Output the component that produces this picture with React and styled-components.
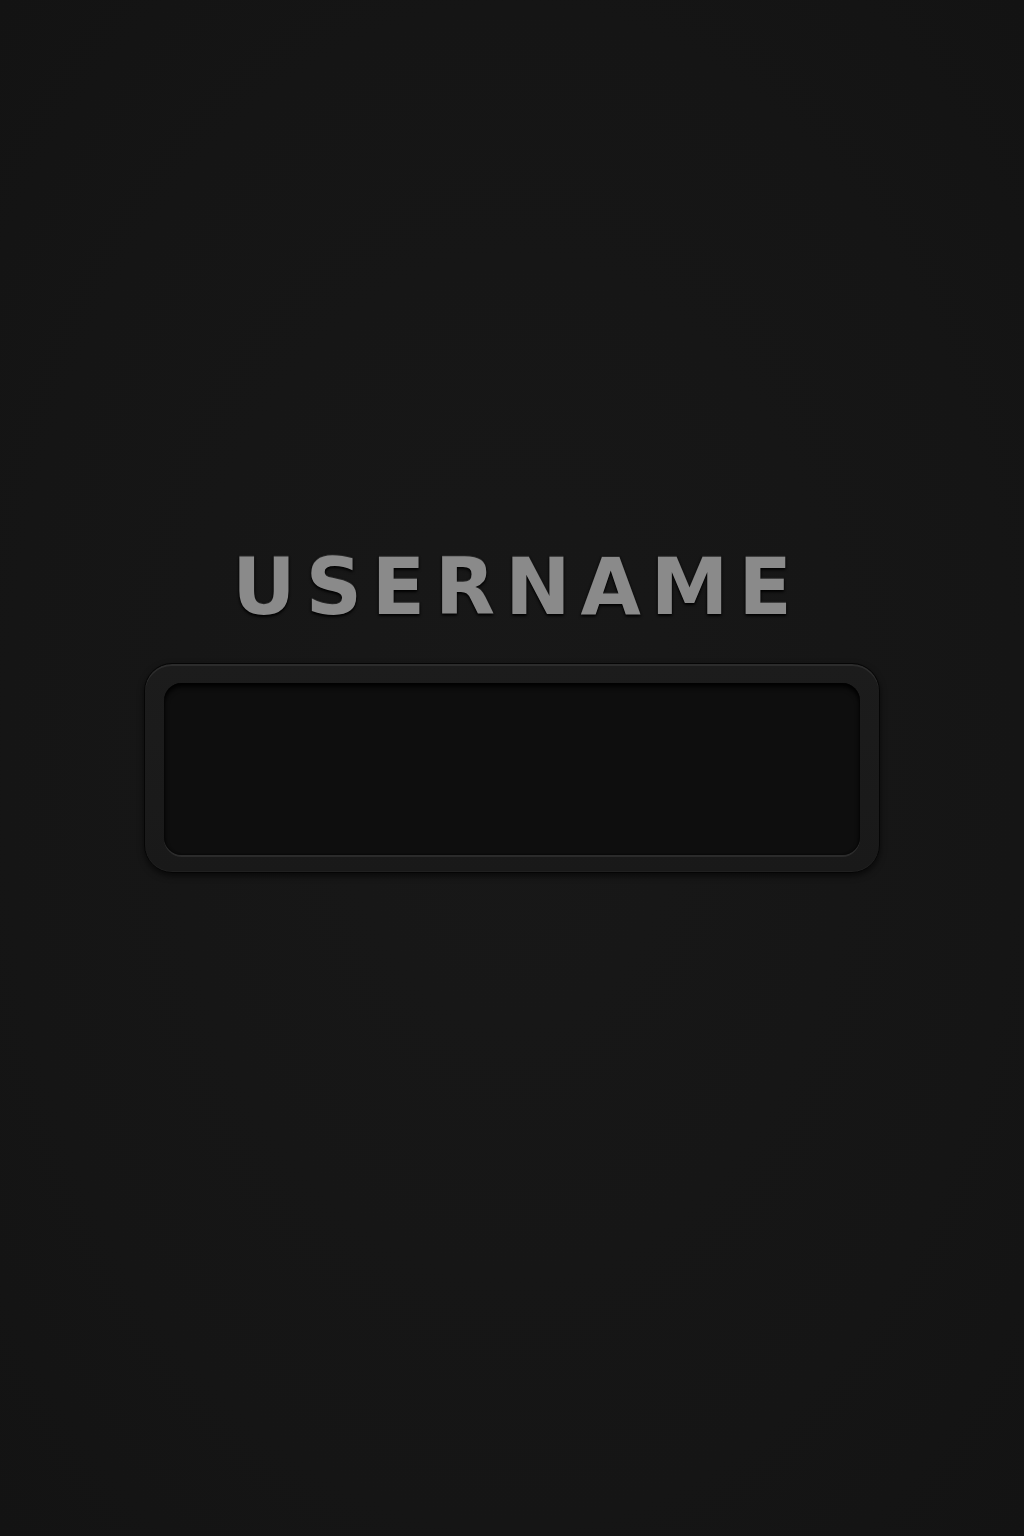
import React from "react";
import styled, { createGlobalStyle } from "styled-components";

const GlobalStyle = createGlobalStyle`
  html, body {
    margin: 0;
    padding: 0;
    background: #161616;
  }
  * {
    box-sizing: border-box;
  }
`;

const Page = styled.div`
  width: 1024px;
  min-height: 1536px;
  display: flex;
  flex-direction: column;
  align-items: center;
  padding-top: 548px;
  background: radial-gradient(ellipse at 50% 50%, #181818 0%, #151515 70%, #131313 100%);
  font-family: "DejaVu Sans", "Liberation Sans", sans-serif;
`;

const Field = styled.div`
  display: flex;
  flex-direction: column;
  align-items: center;
  gap: 37px;
`;

const Label = styled.label`
  font-size: 78px;
  font-weight: 700;
  line-height: 1;
  letter-spacing: 10px;
  margin-right: -10px;
  color: #8a8a8a;
  text-shadow:
    0 -1px 0 rgba(255, 255, 255, 0.1),
    0 0 2px #000,
    0 2px 3px rgba(0, 0, 0, 0.9);
`;

const Frame = styled.div`
  width: 736px;
  height: 210px;
  padding: 19px 19px 17px;
  border-radius: 28px;
  background: linear-gradient(180deg, #1c1c1c 0%, #191919 100%);
  border: 1px solid #050505;
  box-shadow:
    inset 0 2px 0 rgba(255, 255, 255, 0.07),
    inset 0 -1px 0 rgba(255, 255, 255, 0.03),
    0 3px 6px rgba(0, 0, 0, 0.6);
`;

const Input = styled.input`
  display: block;
  width: 100%;
  height: 100%;
  border: none;
  outline: none;
  border-radius: 18px;
  background: #0e0e0e;
  color: #9a9a9a;
  font-family: inherit;
  font-size: 40px;
  padding: 0 28px;
  box-shadow:
    inset 0 4px 5px rgba(0, 0, 0, 0.95),
    inset 0 0 2px #000,
    0 2px 0 rgba(255, 255, 255, 0.08);
`;

export default function App() {
  return (
    <>
      <GlobalStyle />
      <Page>
        <Field>
          <Label htmlFor="username">USERNAME</Label>
          <Frame>
            <Input id="username" type="text" />
          </Frame>
        </Field>
      </Page>
    </>
  );
}
